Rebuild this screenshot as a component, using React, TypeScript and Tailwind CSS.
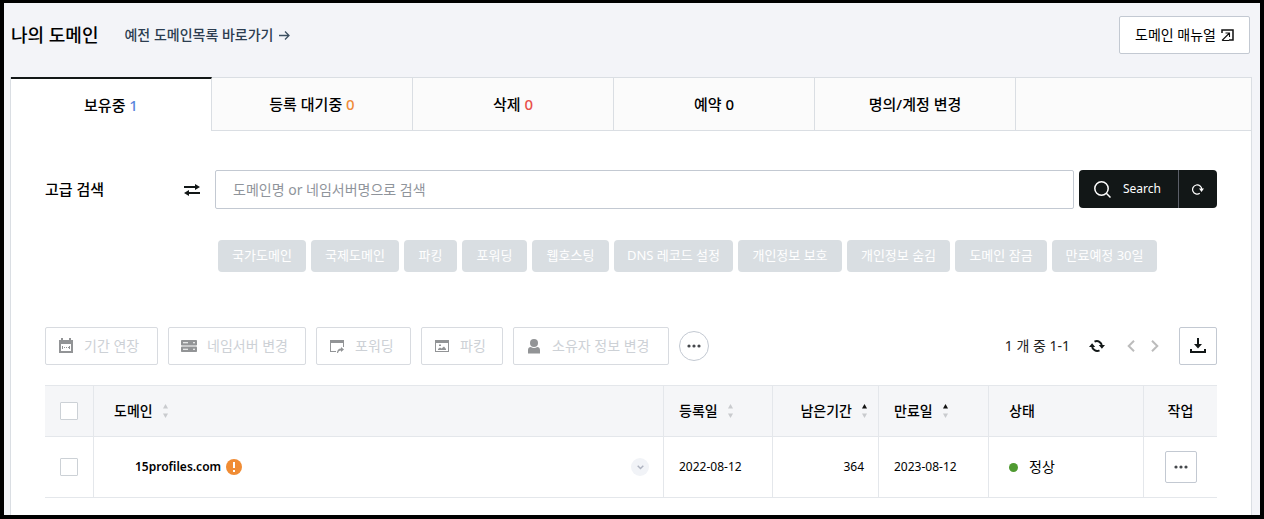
import React from "react";

const tabs = [
  { id: "owned", label: "보유중", count: "1", color: "text-[#5a86dc]" },
  { id: "pending", label: "등록 대기중", count: "0", color: "text-[#f08c3a]" },
  { id: "deleted", label: "삭제", count: "0", color: "text-[#e8504a]" },
  { id: "reserved", label: "예약", count: "0", color: "text-black" },
  { id: "transfer", label: "명의/계정 변경", count: "", color: "" },
];

const filters = [
  { label: "국가도메인", width: "w-[88px]" },
  { label: "국제도메인", width: "w-[88px]" },
  { label: "파킹", width: "w-[53px]" },
  { label: "포워딩", width: "w-[65px]" },
  { label: "웹호스팅", width: "w-[77px]" },
  { label: "DNS 레코드 설정", width: "w-[119px]" },
  { label: "개인정보 보호", width: "w-[104px]" },
  { label: "개인정보 숨김", width: "w-[103px]" },
  { label: "도메인 잠금", width: "w-[92px]" },
  { label: "만료예정 30일", width: "w-[105px]" },
];

const domains = [
  { name: "15profiles.com", registered: "2022-08-12", daysLeft: 364, expires: "2023-08-12", status: "정상" },
];

const CalendarIcon = () => (
  <svg width="14" height="16" viewBox="0 0 14 16" aria-hidden="true">
    <path
      fill="#929496"
      fillRule="evenodd"
      d="M2 0h2v2h6V0h2v2h2v13H0V2h2zM2 6v7h10V6z"
    />
    <path fill="#929496" d="M3 8h1v3H3zM5 9h1v1H5zM7 9h1v1H7zM9 9h1v1H9zM10 8h1v3h-1z" />
  </svg>
);

const ServerIcon = () => (
  <svg width="16" height="12" viewBox="0 0 16 12" aria-hidden="true">
    <rect width="16" height="5.500" rx="0.8" fill="#929496" />
    <rect y="6.500" width="16" height="5.500" rx="0.8" fill="#929496" />
    <path fill="#fff" d="M2 2.200h5v1.100H2zM12 2.200h2v1.100h-2zM2 8.700h5v1.100H2zM12 8.700h2v1.100h-2z" />
  </svg>
);

const ForwardIcon = () => (
  <svg width="14" height="13" viewBox="0 0 14 13" aria-hidden="true">
    <path fill="#929496" d="M0 0h14v7h-1V3H1v8h5v1H0z" />
    <path fill="#929496" d="M11 7l3 2.500-3 2.500v-1.500c-1.800 0-2.500.8-3 2.500H7c0-3 1.500-4.500 4-4.600z" />
  </svg>
);

const ParkingIcon = () => (
  <svg width="14" height="12" viewBox="0 0 14 12" aria-hidden="true">
    <path fill="#929496" fillRule="evenodd" d="M0 0h14v12H0zM1 3v8h12V3z" />
    <path fill="#929496" d="M3 10V9l2-1.500L6.500 8.500 9 6.500l2 2.500v1zM4 4.500h2v1.500H4z" />
  </svg>
);

const UserIcon = () => (
  <svg width="12" height="15" viewBox="0 0 12 15" aria-hidden="true">
    <circle cx="6" cy="4" r="4" fill="#929496" />
    <path fill="#929496" d="M0 14.500V11c0-1.700 1.200-3 2.800-3 1.800 1.300 4.600 1.300 6.400 0 1.600 0 2.800 1.300 2.800 3v3.500z" />
  </svg>
);

const DotsIcon = () => (
  <svg width="14" height="4" viewBox="0 0 14 4" fill="#45484c" aria-hidden="true">
    <circle cx="2" cy="2" r="1.600" />
    <circle cx="7" cy="2" r="1.600" />
    <circle cx="12" cy="2" r="1.600" />
  </svg>
);

const SortIcon = ({ active = false }: { active?: boolean }) => (
  <svg width="5" height="14" viewBox="0 0 5 14" aria-hidden="true">
    <path d="M2.500 0L5 4.500H0z" fill={active ? "#111" : "#c9cbce"} />
    <path d="M0 9.500h5L2.500 14z" fill="#c9cbce" />
  </svg>
);

const actions = [
  { label: "기간 연장", icon: <CalendarIcon />, width: "w-[113px]" },
  { label: "네임서버 변경", icon: <ServerIcon />, width: "w-[138px]" },
  { label: "포워딩", icon: <ForwardIcon />, width: "w-[95px]" },
  { label: "파킹", icon: <ParkingIcon />, width: "w-[82px]" },
  { label: "소유자 정보 변경", icon: <UserIcon />, width: "w-[156px]" },
];

const Checkbox = ({ label }: { label: string }) => (
  <input
    type="checkbox"
    aria-label={label}
    className="block mx-auto size-[18px] appearance-none border border-[#ccd1d6] rounded-[1px] bg-white checked:bg-[#121717]"
  />
);

const PageHeader = () => (
  <header className="flex items-center justify-between h-[74px] pl-[7px] pr-[10px] pb-[10px]">
    <div className="flex items-center gap-[26px]">
      <h1 className="text-[18px] font-medium">나의 도메인</h1>
      <a href="#old" className="flex items-center gap-[6px] text-sm font-medium text-[#2c3d50]">
        예전 도메인목록 바로가기
        <svg width="11" height="9" viewBox="0 0 11 9" fill="none" stroke="#3c4f60" strokeWidth="1.300" aria-hidden="true">
          <path d="M0 4.500h10M6 .5l4 4-4 4" />
        </svg>
      </a>
    </div>
    <button type="button" className="flex items-center justify-center gap-[5px] w-[131px] h-[38px] bg-white border border-[#c3c9d2] rounded-[2px] text-sm">
      도메인 매뉴얼
      <svg width="13" height="12" viewBox="0 0 13 12" fill="none" stroke="#111" aria-hidden="true">
        <path d="M1 4V1h11v10H8" strokeWidth="1.500" />
        <path d="M1 11.500h7M1 11.500L8.500 4M4.500 4h4v4" strokeWidth="1.100" />
      </svg>
    </button>
  </header>
);

const TabBar = () => (
  <nav className="flex h-[54px] text-[15px] font-medium">
    {tabs.map((tab, i) => (
      <button
        key={tab.id}
        type="button"
        className={
          i === 0
            ? "w-[201px] bg-white border-t-2 border-t-[#121717] border-r border-r-[#dadee3]"
            : "w-[201px] bg-[#fbfbfb] border-y border-r border-[#dadee3]"
        }
      >
        {tab.label} <span className={tab.color}>{tab.count}</span>
      </button>
    ))}
    <div className="flex-1 bg-[#fbfbfb] border-y border-[#dadee3]" />
  </nav>
);

const SearchForm = () => (
  <form className="flex items-center" onSubmit={(e) => e.preventDefault()}>
    <label htmlFor="domain-search" className="flex-1 max-w-[139px] min-w-[90px] text-[15px] font-medium">
      고급 검색
    </label>
    <svg className="mr-[15px] shrink-0" width="16" height="12" viewBox="0 0 16 12" fill="#121717" aria-hidden="true">
      <path d="M0 2h11V0l5 3-5 3V4H0zM16 10H5v2L0 9l5-3v2h11z" />
    </svg>
    <input
      id="domain-search"
      type="text"
      placeholder="도메인명 or 네임서버명으로 검색"
      className="flex-1 min-w-0 h-[39px] px-[17px] border border-[#c3c9d2] rounded-[2px] text-sm placeholder:text-[#8f949b]"
    />
    <button type="submit" className="flex items-center self-start gap-3 w-[99px] h-[38px] ml-[5px] pl-[15px] rounded-l-[4px] bg-[#121717] text-[12px] text-white">
      <svg width="17" height="17" viewBox="0 0 17 17" fill="none" stroke="#fff" strokeWidth="1.500" aria-hidden="true">
        <circle cx="7.500" cy="7.500" r="6.700" />
        <path d="M12.300 12.300L16.500 16.500" />
      </svg>
      Search
    </button>
    <button type="reset" aria-label="초기화" className="flex items-center self-start justify-center w-[39px] h-[38px] rounded-r-[4px] bg-[#121717] border-l border-[#5b5f68]">
      <svg width="12" height="11" viewBox="0 0 12 11" aria-hidden="true">
        <path d="M9.800 5.500A4.600 4.600 0 1 0 7.800 9.300" fill="none" stroke="#fff" strokeWidth="1.200" />
        <path d="M7 4.500h5L9.500 8z" fill="#fff" />
      </svg>
    </button>
  </form>
);

const Toolbar = () => (
  <div className="flex items-center justify-between mt-[55px]">
    <div className="flex items-center gap-[10px]">
      {actions.map((action) => (
        <button
          key={action.label}
          type="button"
          disabled
          className={`flex items-center h-[38px] pl-3 border border-[#d8dbe0] rounded-[2px] text-sm text-[#cdd1d6] whitespace-nowrap ${action.width}`}
        >
          <span className="flex justify-center w-4 mr-[10px]">{action.icon}</span>
          {action.label}
        </button>
      ))}
      <button type="button" aria-label="더보기" className="flex items-center justify-center size-[30px] rounded-full border border-[#c3c9d2]">
        <DotsIcon />
      </button>
    </div>
    <div className="flex items-center">
      <span className="text-sm text-[#222]">1 개 중 1-1</span>
      <button type="button" aria-label="새로고침" className="ml-[19px]">
        <svg width="16" height="12" viewBox="0 0 16 12" aria-hidden="true">
          <g fill="none" stroke="#121717" strokeWidth="2">
            <path d="M5.500 1.700A5 5 0 0 1 12.900 6" />
            <path d="M10.500 10.300A5 5 0 0 1 3.100 6" />
          </g>
          <path d="M9.800 5H16l-3.100 3.700zM0 7h6.200L3.100 3.300z" fill="#121717" />
        </svg>
      </button>
      <button type="button" aria-label="이전" className="ml-[22px]">
        <svg width="8" height="12" viewBox="0 0 8 12" fill="none" stroke="#bcbcbc" strokeWidth="2" aria-hidden="true">
          <path d="M7 .7L1.700 6 7 11.300" />
        </svg>
      </button>
      <button type="button" aria-label="다음" className="ml-4">
        <svg width="8" height="12" viewBox="0 0 8 12" fill="none" stroke="#bcbcbc" strokeWidth="2" aria-hidden="true">
          <path d="M1 .7L6.300 6 1 11.300" />
        </svg>
      </button>
      <button type="button" aria-label="다운로드" className="flex items-center justify-center size-[38px] ml-5 border border-[#c3c9d2] rounded-[2px]">
        <svg width="16" height="16" viewBox="0 0 16 16" fill="#121717" aria-hidden="true">
          <path d="M7 0h2v6h3l-4 4.500L4 6h3zM0 11h2v2h12v-2h2v4H0z" />
        </svg>
      </button>
    </div>
  </div>
);

const DomainTable = () => (
  <table className="w-full table-fixed mt-5 border-separate border-spacing-0 text-sm text-left [&_th]:border-y [&_td]:border-b [&_th]:border-[#e4e7eb] [&_td]:border-[#e4e7eb] [&_th:not(:last-child)]:border-r [&_td:not(:last-child)]:border-r">
    <colgroup>
      <col className="w-[49px]" />
      <col />
      <col className="w-[109px]" />
      <col className="w-[106px]" />
      <col className="w-[110px]" />
      <col className="w-[155px]" />
      <col className="w-[73px]" />
    </colgroup>
    <thead className="bg-[#f5f6f8]">
      <tr className="h-[52px] [&>th]:font-medium">
        <th><Checkbox label="전체 선택" /></th>
        <th className="pl-5">
          <button type="button" className="flex items-center gap-[10px]">도메인 <SortIcon /></button>
        </th>
        <th className="pl-[15px]">
          <button type="button" className="flex items-center gap-[10px]">등록일 <SortIcon /></button>
        </th>
        <th className="pr-[11px]">
          <button type="button" className="flex items-center gap-[10px] ml-auto">남은기간 <SortIcon active /></button>
        </th>
        <th className="pl-[15px]">
          <button type="button" className="flex items-center gap-[10px]">만료일 <SortIcon active /></button>
        </th>
        <th className="pl-5">상태</th>
        <th className="text-center">작업</th>
      </tr>
    </thead>
    <tbody>
      {domains.map((domain) => (
        <tr key={domain.name} className="h-[61px]">
          <td><Checkbox label={domain.name} /></td>
          <td className="pl-[41px] pr-[14px]">
            <div className="flex items-center">
              <a href="#domain" className="text-[12px] font-semibold">{domain.name}</a>
              <svg className="ml-[5px]" width="16" height="16" viewBox="0 0 16 16" aria-hidden="true">
                <circle cx="8" cy="8" r="8" fill="#f08c34" />
                <path d="M7 3h2v6H7zM7 11h2v2H7z" fill="#fff" />
              </svg>
              <button type="button" aria-label="펼치기" className="flex items-center justify-center size-[18px] ml-auto rounded-full bg-[#f1f3f7]">
                <svg width="7" height="5" viewBox="0 0 7 5" fill="none" stroke="#aeb3c0" strokeWidth="1.500" aria-hidden="true">
                  <path d="M.7 .8l2.800 2.700L6.300 .8" />
                </svg>
              </button>
            </div>
          </td>
          <td className="pl-[15px] text-[12px]">{domain.registered}</td>
          <td className="pr-[14px] text-right text-[12px]">{domain.daysLeft}</td>
          <td className="pl-[15px] text-[12px]">{domain.expires}</td>
          <td className="pl-5">
            <span className="flex items-center gap-[11px]">
              <i className="size-[9px] rounded-full bg-[#4f9a31]" />
              {domain.status}
            </span>
          </td>
          <td>
            <button type="button" aria-label="작업 메뉴" className="flex items-center justify-center size-8 mx-auto border border-[#c3c9d2] rounded-[2px]">
              <DotsIcon />
            </button>
          </td>
        </tr>
      ))}
    </tbody>
  </table>
);

const App = () => {
  return (
    <div className="flex flex-col min-h-screen bg-[#f3f4f8] border-4 border-t-[3px] border-black text-black font-['Noto_Sans','Noto_Sans_CJK_KR',sans-serif]">
      <PageHeader />
      <main className="flex-1 ml-[6px] mr-2 bg-white border-x border-[#dadee3]">
        <TabBar />
        <div className="px-[34px] pt-[39px] pb-[17px]">
          <SearchForm />
          <div className="flex flex-wrap gap-[5px] mt-[31px] pl-[173px]">
            {filters.map((filter) => (
              <button
                key={filter.label}
                type="button"
                className={`h-8 rounded-[4px] bg-[#d9dee2] text-[13px] text-white whitespace-nowrap ${filter.width}`}
              >
                {filter.label}
              </button>
            ))}
          </div>
          <Toolbar />
          <DomainTable />
        </div>
      </main>
    </div>
  );
};

export default App;
